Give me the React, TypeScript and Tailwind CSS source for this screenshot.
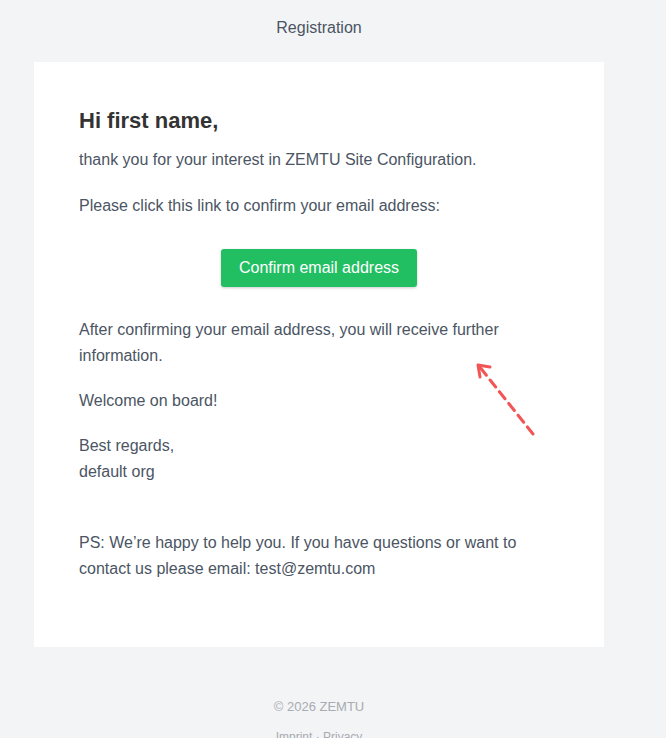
import React from "react";

export default function App() {
  return (
    <div
      className="relative min-h-[738px] w-full bg-[#f3f4f6] pb-10"
      style={{ fontFamily: '"Liberation Sans", Arial, sans-serif' }}
    >
      <div className="w-[638px]">
        <div className="flex h-[62px] items-center justify-center pb-[6px] text-[16px] text-[#4b5563]">
          Registration
        </div>
        <div className="mx-[34px] w-[570px] bg-white px-[45px] pb-[45px] pt-[45px] text-[16px] leading-[26px] text-[#4b5563]">
          <h1 className="mb-[12px] text-[22px] font-bold leading-[28px] text-[#333333]">
            Hi first name,
          </h1>
          <p className="mb-[20px]">thank you for your interest in ZEMTU Site Configuration.</p>
          <p>Please click this link to confirm your email address:</p>
          <div className="mb-[30px] mt-[30px] flex justify-center">
            <span className="flex h-[38px] w-[196px] items-center justify-center rounded-[3px] bg-[#22bf62] text-[16px] text-white shadow-[0_1px_3px_rgba(0,0,0,0.2)]">
              Confirm email address
            </span>
          </div>
          <p className="mb-[19px]">
            After confirming your email address, you will receive further information.
          </p>
          <p className="mb-[19px]">Welcome on board!</p>
          <p className="mb-[45px]">
            Best regards,
            <br />
            default org
          </p>
          <p className="mb-[20px]">
            PS: We’re happy to help you. If you have questions or want to contact us please email:
            test@zemtu.com
          </p>
        </div>
        <div className="mt-[51px] text-center text-[13px] font-medium leading-[18px] text-[#a8abb1]">
          © 2026 ZEMTU
        </div>
        <div className="mt-[13px] text-center text-[12px] leading-[16px] text-[#a8abb1]">
          Imprint · Privacy
        </div>
      </div>
      <svg
        className="pointer-events-none absolute left-[470px] top-[358px]"
        width="72"
        height="84"
        viewBox="0 0 72 84"
      >
        <line
          x1="63"
          y1="76"
          x2="9"
          y2="8"
          stroke="#f25555"
          strokeWidth="3"
          strokeLinecap="round"
          strokeDasharray="9 6"
        />
        <polyline
          points="20,9 8,7 10,19"
          fill="none"
          stroke="#f25555"
          strokeWidth="3"
          strokeLinecap="round"
          strokeLinejoin="round"
        />
      </svg>
    </div>
  );
}
